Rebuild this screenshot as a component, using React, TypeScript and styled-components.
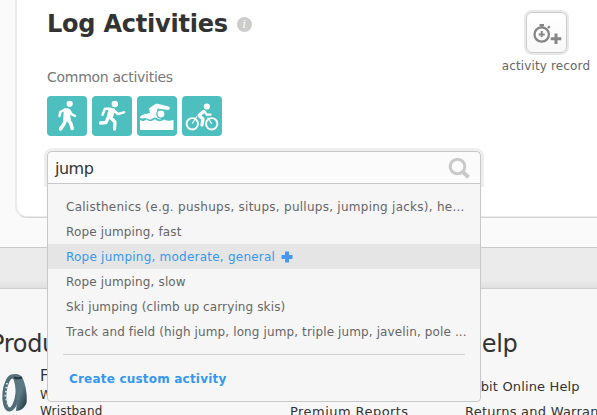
import React from 'react';
import styled, { createGlobalStyle } from 'styled-components';

const GlobalStyle = createGlobalStyle`
  * { box-sizing: border-box; }
  html, body { margin: 0; overflow: hidden; }
  body { background: #fafafa; font-family: "DejaVu Sans", sans-serif; color: #333; }
  h1, h2, p, ul { margin: 0; padding: 0; font-weight: normal; }
`;

const Page = styled.div`
  width: 597px;
  height: 415px;
  overflow: hidden;
  background: #fafafa;
`;

const Main = styled.main`
  height: 247px;
  padding-left: 15px;
`;

const Card = styled.section`
  display: flex;
  justify-content: space-between;
  width: 620px;
  height: 218px;
  padding: 8px 44px 0 30px;
  background: #fff;
  border-left: 2px solid #ebebeb;
  border-bottom: 1px solid #d3d3d3;
  border-bottom-left-radius: 12px;
  box-shadow: inset 0 -1px 0 #ebebeb;
`;

const LogColumn = styled.div`
  width: 434px;
`;

const Heading = styled.div`
  display: flex;
  align-items: center;
  gap: 9px;
  height: 32px;
`;

const Title = styled.h1`
  font-size: 24px;
  line-height: 32px;
  font-weight: bold;
  letter-spacing: -0.22px;
  white-space: nowrap;
`;

const InfoBadge = styled.span`
  width: 15px;
  height: 15px;
  border-radius: 50%;
  background: #ccc;
  color: #fff;
  font: italic 11px/15px "DejaVu Serif", serif;
  text-align: center;
`;

const Caption = styled.p`
  margin-top: 27px;
  font-size: 14px;
  line-height: 20px;
  letter-spacing: -0.28px;
  color: #777;
`;

const Tiles = styled.div`
  display: flex;
  gap: 5px;
  margin-top: 9px;
`;

const Tile = styled.div`
  width: 40px;
  height: 40px;
  border-radius: 4px;
  background: #4dbfbf;
  svg { display: block; }
`;

const SearchArea = styled.div`
  position: relative;
  margin-top: 15px;
`;

const SearchBox = styled.div`
  display: flex;
  align-items: center;
  justify-content: space-between;
  width: 434px;
  height: 33px;
  padding: 0 10px 0 7px;
  border: 1px solid #c8c8c8;
  border-bottom: 0;
  border-radius: 5px 5px 0 0;
  background: #fbfbfb;
  box-shadow: 0 0 0 3px #eee;
  font-size: 16px;
  letter-spacing: -0.5px;
`;

const Dropdown = styled.div`
  position: absolute;
  top: 32px;
  left: 0;
  z-index: 2;
  width: 434px;
  height: 219px;
  padding-top: 10px;
  border: 1px solid #c8c8c8;
  border-radius: 0 0 4px 4px;
  background: #f6f6f6;
`;

const Options = styled.ul`
  list-style: none;
`;

const Option = styled.li<{ $active?: boolean; $tracking: number }>`
  display: flex;
  align-items: center;
  gap: 6px;
  height: 25px;
  padding-left: 18px;
  font-size: 12px;
  letter-spacing: ${p => p.$tracking}px;
  white-space: nowrap;
  color: ${p => (p.$active ? '#3598f0' : '#666')};
  background: ${p => (p.$active ? '#e5e5e5' : 'transparent')};
`;

const CreateRow = styled.div`
  margin: 10px 15px 0;
  padding: 14px 0 0 6px;
  border-top: 1px solid #d2d2d2;
  color: #3598f0;
  font-size: 12px;
  line-height: 20px;
  font-weight: bold;
  letter-spacing: 0.2px;
`;

const RecordAction = styled.div`
  display: flex;
  flex-direction: column;
  align-items: center;
  width: 90px;
  padding-top: 4px;
  font-size: 12px;
  line-height: 17px;
  letter-spacing: 0.13px;
  color: #666;
  white-space: nowrap;
`;

const RecordButton = styled.div`
  width: 41px;
  height: 41px;
  margin: 0 0 5px;
  border: 1px solid #ccc;
  border-radius: 6px;
  background: linear-gradient(#fff, #f8f8f8);
  box-shadow: 0 0 0 2px #e9e9e9;
  svg { display: block; }
`;

const Band = styled.div`
  height: 41px;
  border-top: 1px solid #c8c8c8;
  background: linear-gradient(#ebebeb 80%, #e0e0e0);
`;

const Footer = styled.footer`
  display: grid;
  grid-template-columns: 290px 175px 132px;
  height: 127px;
  padding-top: 39px;
  border-top: 1px solid #cecece;
  background: #f7f7f7;
  white-space: nowrap;
`;

const FooterColumn = styled.div`
  min-width: 0;
`;

const FooterTitle = styled.h2<{ $offset?: number }>`
  height: 32px;
  margin-left: ${p => p.$offset || 0}px;
  font-size: 24px;
  line-height: 32px;
  letter-spacing: -0.3px;
`;

const Product = styled.div`
  display: flex;
  align-items: flex-start;
  gap: 10px;
  margin-top: 7px;
  svg { flex: none; margin-top: 5px; }
`;

const ProductText = styled.div`
  font-size: 15px;
  line-height: 19px;
`;

const ProductNote = styled.div`
  position: relative;
  top: 1px;
  font-size: 12px;
  line-height: 16px;
  letter-spacing: 0.2px;
`;

const FooterLink = styled.p<{ $tracking: number }>`
  height: 25px;
  font-size: 13px;
  line-height: 25px;
  letter-spacing: ${p => p.$tracking}px;
`;

const LinkList = styled.div`
  margin-top: 14px;
`;

const WalkIcon = () => (
  <svg width="40" height="40" viewBox="0 0 40 40" fill="none" stroke="#fff" strokeLinecap="round" strokeLinejoin="round">
    <circle cx="22.7" cy="7.8" r="3.1" fill="#fff" stroke="none" />
    <path d="M18.500 14h2.500l1 9.500h-4z" fill="#fff" strokeWidth="3.500" />
    <path d="M18 13.500l-4.700 2.500-.8 4M22.500 14.500l2 3.700 3.500 1.800" strokeWidth="2.500" />
    <path d="M18.500 23.500L17 28l-3.500 5M21 23.500l2.800 4 1.400 5" strokeWidth="3.500" />
  </svg>
);

const RunIcon = () => (
  <svg width="40" height="40" viewBox="0 0 40 40" fill="none" stroke="#fff" strokeLinecap="round" strokeLinejoin="round">
    <circle cx="22.8" cy="8" r="3.2" fill="#fff" stroke="none" />
    <path d="M18.500 14.500h2.500l-2.500 6.500h-1.500z" fill="#fff" strokeWidth="4.500" />
    <path d="M18.500 12.800h-5.500l-2.500 6M22 14.500l4 3.500 6-1.600" strokeWidth="2.500" />
    <path d="M16.500 21L14 26.500l-5.500.5M18 21l5 5-.5 7" strokeWidth="3.300" />
  </svg>
);

const SwimIcon = () => (
  <svg width="40" height="40" viewBox="0 0 40 40" fill="#fff">
    <path d="M3 21c2-3 6-3 10-4l-1-4.500L18.500 8c1-.6 2-.3 3 0l10 2.500c2.300.8 1.500 3.500-.8 3.500L21 12.500l-1 1.500 4 9.500c-3 0-4-2-6-2s-3 2-5 2-3-1.500-5-1.500-3 1-5 0z" />
    <circle cx="24" cy="18" r="4.100" stroke="#4dbfbf" strokeWidth="1.400" />
    <path d="M3 24c3 1.500 4 1 6-.6 3 1.600 5 2.600 9-.2 4 2.800 6 2.500 9 .3 3 1.500 5 1.500 9.500.5V34H3z" />
  </svg>
);

const BikeIcon = () => (
  <svg width="40" height="40" viewBox="0 0 40 40" fill="none" stroke="#fff" strokeLinecap="round" strokeLinejoin="round">
    <circle cx="10.300" cy="27.800" r="5.700" strokeWidth="1.900" />
    <circle cx="29.700" cy="27.800" r="5.700" strokeWidth="1.900" />
    <circle cx="24.800" cy="10.500" r="3.100" fill="#fff" stroke="none" />
    <path d="M21.500 15.500L17 19.500l4 3.500-1 6" strokeWidth="3.300" />
    <path d="M22.500 15.500l2.200 3.200h3.800" strokeWidth="2.300" />
    <path d="M10.500 27l4-6M26 22l3.500 5.500" strokeWidth="1.200" />
  </svg>
);

const SearchIcon = () => (
  <svg width="23" height="23" viewBox="0 0 23 23" fill="none" stroke="#c9c9c9">
    <circle cx="10.500" cy="9.500" r="7.300" strokeWidth="3" />
    <path d="M16 15l5.500 5.300" strokeWidth="4" />
  </svg>
);

const RecordIcon = () => (
  <svg width="39" height="39" viewBox="0 0 39 39" fill="none" stroke="#868686">
    <circle cx="14.700" cy="21.500" r="7.200" strokeWidth="2.300" />
    <path d="M14.700 14v-3M12.500 12.200h4.500M21 15l1.800-1.800" strokeWidth="2.200" />
    <path d="M14.700 18v6M11.700 21.500h6" strokeWidth="2" />
    <path d="M29 20.500v10.500M23.700 25.700h10.600" strokeWidth="3" />
  </svg>
);

const PlusIcon = () => (
  <svg width="12" height="12" viewBox="0 0 12 12">
    <path d="M6 .5v11M.5 6h11" stroke="#4598f5" strokeWidth="4" />
  </svg>
);

const WristbandIcon = () => (
  <svg width="30" height="42" viewBox="0 0 30 42">
    <defs>
      <linearGradient id="strap" x1="0" y1="0" x2="1" y2="1">
        <stop offset="0" stopColor="#55717b" />
        <stop offset=".55" stopColor="#5b7a85" />
        <stop offset="1" stopColor="#192e35" />
      </linearGradient>
    </defs>
    <ellipse cx="11" cy="21" rx="6.500" ry="16.500" fill="none" stroke="#4f6c77" strokeWidth="4" transform="rotate(6 11 21)" />
    <path d="M11 3c5-2 10-1 12 4 3 7 4.500 18 3.500 24-2 5-6 8-10.500 8 1-7 1-16-.5-23-1-6-1.500-10-4.500-13z" fill="url(#strap)" />
    <path d="M14 5.500c3 1 5 1 8 0" stroke="#23353c" strokeWidth="2" fill="none" />
    <path d="M7 11l-1.500 13 3 11" fill="none" stroke="#d8e0e2" strokeWidth="2" strokeDasharray="1.5 2.5" />
  </svg>
);

const activities: { name: string; tracking: number; active?: boolean }[] = [
  { name: 'Calisthenics (e.g. pushups, situps, pullups, jumping jacks), he...', tracking: 0.26 },
  { name: 'Rope jumping, fast', tracking: 0.15 },
  { name: 'Rope jumping, moderate, general', tracking: 0.23, active: true },
  { name: 'Rope jumping, slow', tracking: 0.15 },
  { name: 'Ski jumping (climb up carrying skis)', tracking: 0.12 },
  { name: 'Track and field (high jump, long jump, triple jump, javelin, pole ...', tracking: 0.12 },
];

export default function App() {
  return (
    <Page>
      <GlobalStyle />
      <Main>
        <Card>
          <LogColumn>
            <Heading>
              <Title>Log Activities</Title>
              <InfoBadge>i</InfoBadge>
            </Heading>
            <Caption>Common activities</Caption>
            <Tiles>
              <Tile><WalkIcon /></Tile>
              <Tile><RunIcon /></Tile>
              <Tile><SwimIcon /></Tile>
              <Tile><BikeIcon /></Tile>
            </Tiles>
            <SearchArea>
              <SearchBox><span>jump</span><SearchIcon /></SearchBox>
              <Dropdown>
                <Options>
                  {activities.map(a => (
                    <Option key={a.name} $active={a.active} $tracking={a.tracking}>
                      {a.name}
                      {a.active && <PlusIcon />}
                    </Option>
                  ))}
                </Options>
                <CreateRow>Create custom activity</CreateRow>
              </Dropdown>
            </SearchArea>
          </LogColumn>
          <RecordAction>
            <RecordButton><RecordIcon /></RecordButton>
            activity record
          </RecordAction>
        </Card>
      </Main>
      <Band />
      <Footer>
        <FooterColumn>
          <FooterTitle $offset={-10}>Products</FooterTitle>
          <Product>
            <WristbandIcon />
            <ProductText>
              Flex
              <ProductNote>Wireless</ProductNote>
              <ProductNote>Wristband</ProductNote>
            </ProductText>
          </Product>
        </FooterColumn>
        <FooterColumn>
          <FooterTitle />
          <LinkList>
            <FooterLink $tracking={0}>Premium</FooterLink>
            <FooterLink $tracking={0.45}>Premium Reports</FooterLink>
          </LinkList>
        </FooterColumn>
        <FooterColumn>
          <FooterTitle $offset={-1}>Help</FooterTitle>
          <LinkList>
            <FooterLink $tracking={0.15}>Fitbit Online Help</FooterLink>
            <FooterLink $tracking={0.25}>Returns and Warranty</FooterLink>
          </LinkList>
        </FooterColumn>
      </Footer>
    </Page>
  );
}
